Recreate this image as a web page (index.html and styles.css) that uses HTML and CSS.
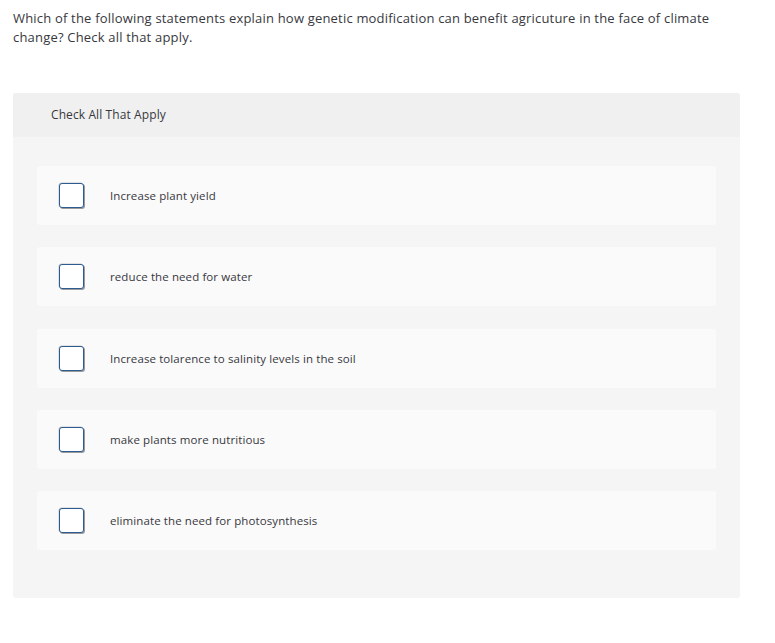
FILE: index.html
```html
<!DOCTYPE html>
<html>
<head>
<meta charset="utf-8">
<link rel="stylesheet" href="styles.css">
</head>
<body>
<p class="question">Which of the following statements explain how genetic modification can benefit agricuture in the face of climate change? Check all that apply.</p>
<div class="panel">
  <div class="panel-head">Check All That Apply</div>
  <div class="panel-body">
    <label class="option"><span class="box"></span><span class="text">Increase plant yield</span></label>
    <label class="option"><span class="box"></span><span class="text">reduce the need for water</span></label>
    <label class="option"><span class="box"></span><span class="text">Increase tolarence to salinity levels in the soil</span></label>
    <label class="option"><span class="box"></span><span class="text">make plants more nutritious</span></label>
    <label class="option"><span class="box"></span><span class="text">eliminate the need for photosynthesis</span></label>
  </div>
</div>
</body>
</html>
```
FILE: styles.css
```css
html, body { margin: 0; padding: 0; background: #fff; }
body {
  font-family: "Open Sans", "Liberation Sans", sans-serif;
  color: #38383e;
  width: 775px;
}
.question {
  margin: 0;
  padding: 9px 13px 0 13px;
  font-size: 13px;
  line-height: 19px;
  letter-spacing: 0.19px;
  width: 720px;
}
.panel {
  margin: 46px 0 0 13px;
  width: 727px;
  background: #f5f5f5;
  border-radius: 3px;
  overflow: hidden;
}
.panel-head {
  background: #f0f0f0;
  height: 44px;
  line-height: 44px;
  padding-left: 38px;
  font-size: 12px;
  letter-spacing: 0.1px;
}
.panel-body {
  padding: 29px 24px 48px 24px;
  display: flex;
  flex-direction: column;
  gap: 22.25px;
}
.option {
  display: flex;
  align-items: center;
  height: 59px;
  background: #fafafa;
  border-radius: 3px;
  padding-left: 22px;
}
.box {
  width: 23px;
  height: 23px;
  border: 1.5px solid #2b5d93;
  border-radius: 3px;
  background: #fff;
  box-shadow: 1px 1px 0 #9a9a9a, -0.5px -0.5px 0 #c8c8c8;
  flex: none;
}
.text {
  margin-left: 26px;
  font-size: 11.5px;
  letter-spacing: 0.1px;
}
```
